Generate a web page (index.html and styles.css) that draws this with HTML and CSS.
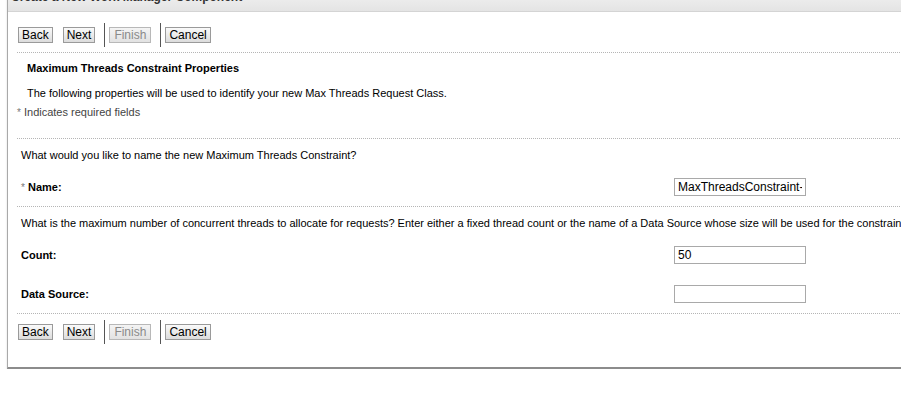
FILE: index.html
```html
<!DOCTYPE html>
<html>
<head>
  <title>Create a New Work Manager Component</title>
  <link rel="stylesheet" href="styles.css">
</head>
<body>
  <div class="panel">
    <div class="panel-title">Create a New Work Manager Component</div>
    <div class="panel-body">
      <div class="button-bar">
        <button type="button" class="btn">Back</button>
        <button type="button" class="btn">Next</button>
        <span class="sep"></span>
        <button type="button" class="btn" disabled>Finish</button>
        <span class="sep"></span>
        <button type="button" class="btn">Cancel</button>
      </div>

      <div class="intro">
        <h2>Maximum Threads Constraint Properties</h2>
        <p>The following properties will be used to identify your new Max Threads Request Class.</p>
      </div>
      <p class="required-note"><span class="star">*</span> Indicates required fields</p>

      <div class="section">
        <p class="question">What would you like to name the new Maximum Threads Constraint?</p>
        <div class="field-row">
          <label for="name"><span class="star">*</span> Name:</label>
          <input type="text" id="name" value="MaxThreadsConstraint-0">
        </div>
      </div>

      <div class="section">
        <p class="question">What is the maximum number of concurrent threads to allocate for requests? Enter either a fixed thread count or the name of a Data Source whose size will be used for the constraint.</p>
        <div class="field-row">
          <label for="count">Count:</label>
          <input type="text" id="count" value="50">
        </div>
        <div class="field-row">
          <label for="datasource">Data Source:</label>
          <input type="text" id="datasource" value="">
        </div>
      </div>

      <div class="button-bar bottom">
        <button type="button" class="btn">Back</button>
        <button type="button" class="btn">Next</button>
        <span class="sep"></span>
        <button type="button" class="btn" disabled>Finish</button>
        <span class="sep"></span>
        <button type="button" class="btn">Cancel</button>
      </div>
    </div>
  </div>
</body>
</html>
```

FILE: styles.css
```css
body {
  margin: 0;
  overflow: hidden;
  background-color: #fff;
  font-family: "Liberation Sans", Arial, sans-serif;
  font-size: 11px;
  color: #000;
}

.panel {
  margin-left: 7px;
  margin-top: -10px;
  width: 1100px;
  border-left: 1px solid #a9a9a9;
  border-bottom: 2px solid #8c8c8c;
  box-shadow: 0 2px 2px #dcdcdc;
}

.panel-title {
  height: 22px;
  padding-left: 3px;
  line-height: 14px;
  font-size: 12px;
  font-weight: bold;
  color: #333;
  background: linear-gradient(#f2f2f2, #e4e4e4);
  border-bottom: 1px solid #d4d4d4;
  box-sizing: border-box;
}

.panel-body {
  padding: 0 0 19px 9px;
}

.button-bar {
  display: flex;
  align-items: center;
  gap: 10px;
  padding: 11px 0 5px 1px;
  border-bottom: 1px dotted #b5b5b5;
}

.button-bar.bottom {
  border-bottom: none;
  padding: 6px 0 4px 1px;
}

.btn {
  height: 16px;
  padding: 0 3px;
  font-family: "Liberation Sans", Arial, sans-serif;
  font-size: 12px;
  color: #000;
  background: linear-gradient(#fafafa, #dcdcdc);
  border: 1px solid #9a9a9a;
  border-radius: 0;
  line-height: 14px;
}

.btn:disabled {
  padding: 0 4px;
  color: #8a8a8a;
  border-color: #b8b8b8;
  background: linear-gradient(#f4f4f4, #e2e2e2);
}

.sep {
  width: 1px;
  height: 24px;
  background-color: #555;
  margin: 0 -6px 0 -1px;
}

.intro {
  padding: 9px 0 0 10px;
}

h2 {
  margin: 0;
  font-size: 11px;
  font-weight: bold;
}

.intro p {
  margin: 13px 0 0;
}

.required-note {
  margin: 7px 0 0;
  color: #444;
}

.star {
  color: #777;
  font-weight: normal;
  font-size: 10px;
}

.section {
  border-top: 1px dotted #b5b5b5;
  padding: 10px 0 0 4px;
  margin-top: 20px;
}

.section + .section {
  margin-top: 0;
  padding-top: 10px;
}

.question {
  margin: 0 0 6px;
  white-space: nowrap;
}

.field-row {
  display: flex;
  align-items: center;
  height: 39px;
}

.field-row label {
  width: 653px;
  font-weight: bold;
}

.field-row input {
  width: 132px;
  height: 18px;
  box-sizing: border-box;
  border: 1px solid #a9a9a9;
  padding: 1px 3px;
  font-family: "Liberation Sans", Arial, sans-serif;
  font-size: 12px;
}

.section + .button-bar {
  border-top: 1px dotted #b5b5b5;
}
```
